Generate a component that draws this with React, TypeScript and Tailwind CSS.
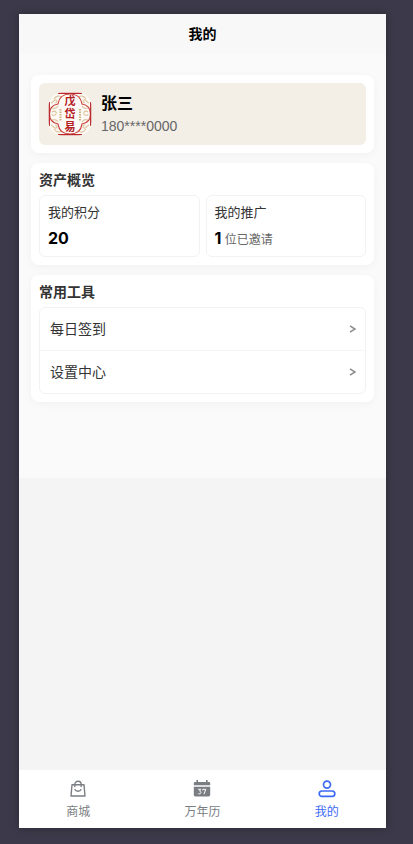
import { useState } from 'react'
import type { ReactNode } from 'react'
import clsx from 'clsx'

const user = {
  name: '张三',
  phone: '180****0000',
  points: 20,
  invited: 1,
}

const tools = [
  { name: '每日签到', href: '#sign-in' },
  { name: '设置中心', href: '#settings' },
]

const Avatar = () => (
  <svg viewBox="0 0 44 44" className="size-11 shrink-0" aria-hidden="true">
    <defs>
      <clipPath id="avatar-clip">
        <rect x="0.5" y="0.5" width="43" height="43" rx="14" />
      </clipPath>
    </defs>
    <g clipPath="url(#avatar-clip)" fill="none">
      <rect width="44" height="44" fill="#fdfaf6" />
      {/* corner clouds */}
      <g stroke="#dcc49c" strokeWidth="1.1">
        <path d="M3 11c3-1 3-4 5-3s1 3-1 3M6 7c2-3 5-4 7-2M4 16c3 1 5 0 6-2" />
        <path d="M41 11c-3-1-3-4-5-3s-1 3 1 3M38 7c-2-3-5-4-7-2M40 16c-3 1-5 0-6-2" />
        <path d="M3 33c3 1 3 4 5 3s1-3-1-3M6 37c2 3 5 4 7 2M4 28c3-1 5 0 6 2" />
        <path d="M41 33c-3 1-3 4-5 3s-1-3 1-3M38 37c-2 3-5 4-7 2M40 28c-3-1-5 0-6 2" />
        <path d="M4 20c3-2 5 0 4 2s-4 2-4 0M40 20c-3-2-5 0-4 2s4 2 4 0" />
      </g>
      <path
        d="M12.5 17v12M32 17v12"
        stroke="#cdb384"
        strokeWidth="2"
        strokeDasharray="1.5 1"
      />
      <path
        d="M10 12C11 5 16 2 22 2S33 5 34 12C40 13 42.500 17 42.500 22S40 31 34 32C33 39 28 42 22 42S11 39 10 32C4 31 1.500 27 1.500 22S4 13 10 12Z"
        stroke="#c9403c"
        strokeWidth="1.2"
      />
      <path
        d="M10 1.200h24M10 42.800h24M1.200 10v24M42.800 10v24"
        stroke="#b8282a"
        strokeWidth="1.500"
      />
    </g>
    <g
      fill="#b3201f"
      textAnchor="middle"
      fontSize="11"
      fontWeight="700"
      fontFamily='"Liberation Serif", "Noto Sans CJK SC", serif'
    >
      <text x="22" y="13">戊</text>
      <text x="22" y="26">岱</text>
      <text x="22" y="39">易</text>
    </g>
  </svg>
)

const BagIcon = () => (
  <svg
    viewBox="0 0 18 18"
    className="size-[18px]"
    fill="none"
    stroke="currentColor"
    strokeWidth="1.4"
    strokeLinecap="round"
    strokeLinejoin="round"
    aria-hidden="true"
  >
    <path d="M3 4.800h12l1 11.200H2Z" />
    <path d="M5.800 6.500V4.400a3.200 3.200 0 0 1 6.400 0v2.100" />
    <path d="M6 9.600c.8 2.200 5.200 2.200 6 0" />
  </svg>
)

const CalendarIcon = () => (
  <svg viewBox="0 0 18 18" className="size-[18px]" fill="currentColor" aria-hidden="true">
    <path d="M3.400 0h1.600v2h8V0h1.600v2h1.200c.8 0 1.400.5 1.400 1.300v1.900H.8V3.300c0-.8.600-1.300 1.400-1.300h1.200Z" />
    <path d="M.8 6.800h16.400v7.900c0 1-.7 1.700-1.700 1.700h-13c-1 0-1.700-.7-1.700-1.700Z" />
    <path
      d="M5.200 9.300h2.600L6.600 11.100c1.800 0 1.800 2.800-.2 2.800-.6 0-1-.2-1.200-.6M9.800 10.400V9.300h3l-1.800 4.800"
      fill="none"
      stroke="#fff"
      strokeWidth="1"
    />
  </svg>
)

const UserIcon = () => (
  <svg
    viewBox="0 0 18 18"
    className="size-[18px]"
    fill="none"
    stroke="currentColor"
    strokeWidth="1.700"
    aria-hidden="true"
  >
    <circle cx="9" cy="4.600" r="3.500" />
    <rect x="1.200" y="11" width="15.600" height="5.400" rx="2.700" />
  </svg>
)

const tabs = [
  { id: 'shop', name: '商城', icon: <BagIcon /> },
  { id: 'calendar', name: '万年历', icon: <CalendarIcon /> },
  { id: 'mine', name: '我的', icon: <UserIcon /> },
]

const Card = ({ title, children }: { title?: string; children: ReactNode }) => (
  <section className="rounded-lg bg-white p-2 shadow-[0_2px_8px_rgba(0,0,0,0.04)]">
    {title && (
      <h2 className="mb-1.5 text-sm leading-[18px] font-bold text-[#333]">{title}</h2>
    )}
    {children}
  </section>
)

const AssetItem = ({ label, children }: { label: string; children: ReactNode }) => (
  <div className="flex-1 rounded-md border border-[#f2f2f2] px-2 py-1">
    <div className="text-[13px] leading-[26px] text-[#333]">{label}</div>
    <div className="text-xs leading-6 text-[#666]">{children}</div>
  </div>
)

const Count = ({ value }: { value: number }) => (
  <span className='font-[Inter,sans-serif] text-base leading-6 font-bold text-black'>
    {value}
  </span>
)

const App = () => {
  const [activeTab, setActiveTab] = useState('mine')

  return (
    <div className='flex min-h-screen flex-col bg-[#3c394a] pt-3.5 pr-[27px] pb-4 pl-[19px] font-["Liberation_Sans","Noto_Sans_CJK_SC",sans-serif]'>
      <div className="flex flex-1 flex-col bg-[#f4f4f4] shadow-[0_0_8px_rgba(0,0,0,0.3)]">
        <header className="bg-[#f8f8f8] text-center">
          <h1 className="text-sm leading-10 font-bold text-black">我的</h1>
        </header>

        <main className="flex flex-col gap-2.5 bg-[#fafafa] px-3 pt-[21px] pb-19">
          <Card>
            <div className="flex items-center gap-[9px] rounded-md bg-[#f3eee6] p-[9px]">
              <Avatar />
              <div>
                <div className="text-base leading-6 font-bold text-black">{user.name}</div>
                <div className="text-sm leading-5 text-[#666]">{user.phone}</div>
              </div>
            </div>
          </Card>

          <Card title="资产概览">
            <div className="flex gap-1.5">
              <AssetItem label="我的积分">
                <Count value={user.points} />
              </AssetItem>
              <AssetItem label="我的推广">
                <Count value={user.invited} /> 位已邀请
              </AssetItem>
            </div>
          </Card>

          <Card title="常用工具">
            <ul className="divide-y divide-[#f5f5f5] rounded-md border border-[#f2f2f2]">
              {tools.map((tool) => (
                <li key={tool.name}>
                  <a
                    href={tool.href}
                    className="flex items-center justify-between pr-2 pl-2.5 text-sm leading-[42px] text-[#333]"
                  >
                    {tool.name}
                    <svg
                      viewBox="0 0 8 10"
                      className="h-2.5 w-2"
                      fill="none"
                      stroke="#8c8c8c"
                      strokeWidth="1.500"
                      aria-hidden="true"
                    >
                      <path d="M1 1.800 6 5 1 8.200" />
                    </svg>
                  </a>
                </li>
              ))}
            </ul>
          </Card>
        </main>

        <nav className="mt-auto flex gap-1.5 bg-white">
          {tabs.map((tab) => (
            <button
              key={tab.id}
              type="button"
              onClick={() => setActiveTab(tab.id)}
              className={clsx(
                'flex flex-1 flex-col items-center gap-1.5 pt-2.5 pb-2 text-xs',
                activeTab === tab.id ? 'text-[#3c6af5]' : 'text-[#7a7e83]'
              )}
            >
              {tab.icon}
              <span>{tab.name}</span>
            </button>
          ))}
        </nav>
      </div>
    </div>
  )
}

export default App
